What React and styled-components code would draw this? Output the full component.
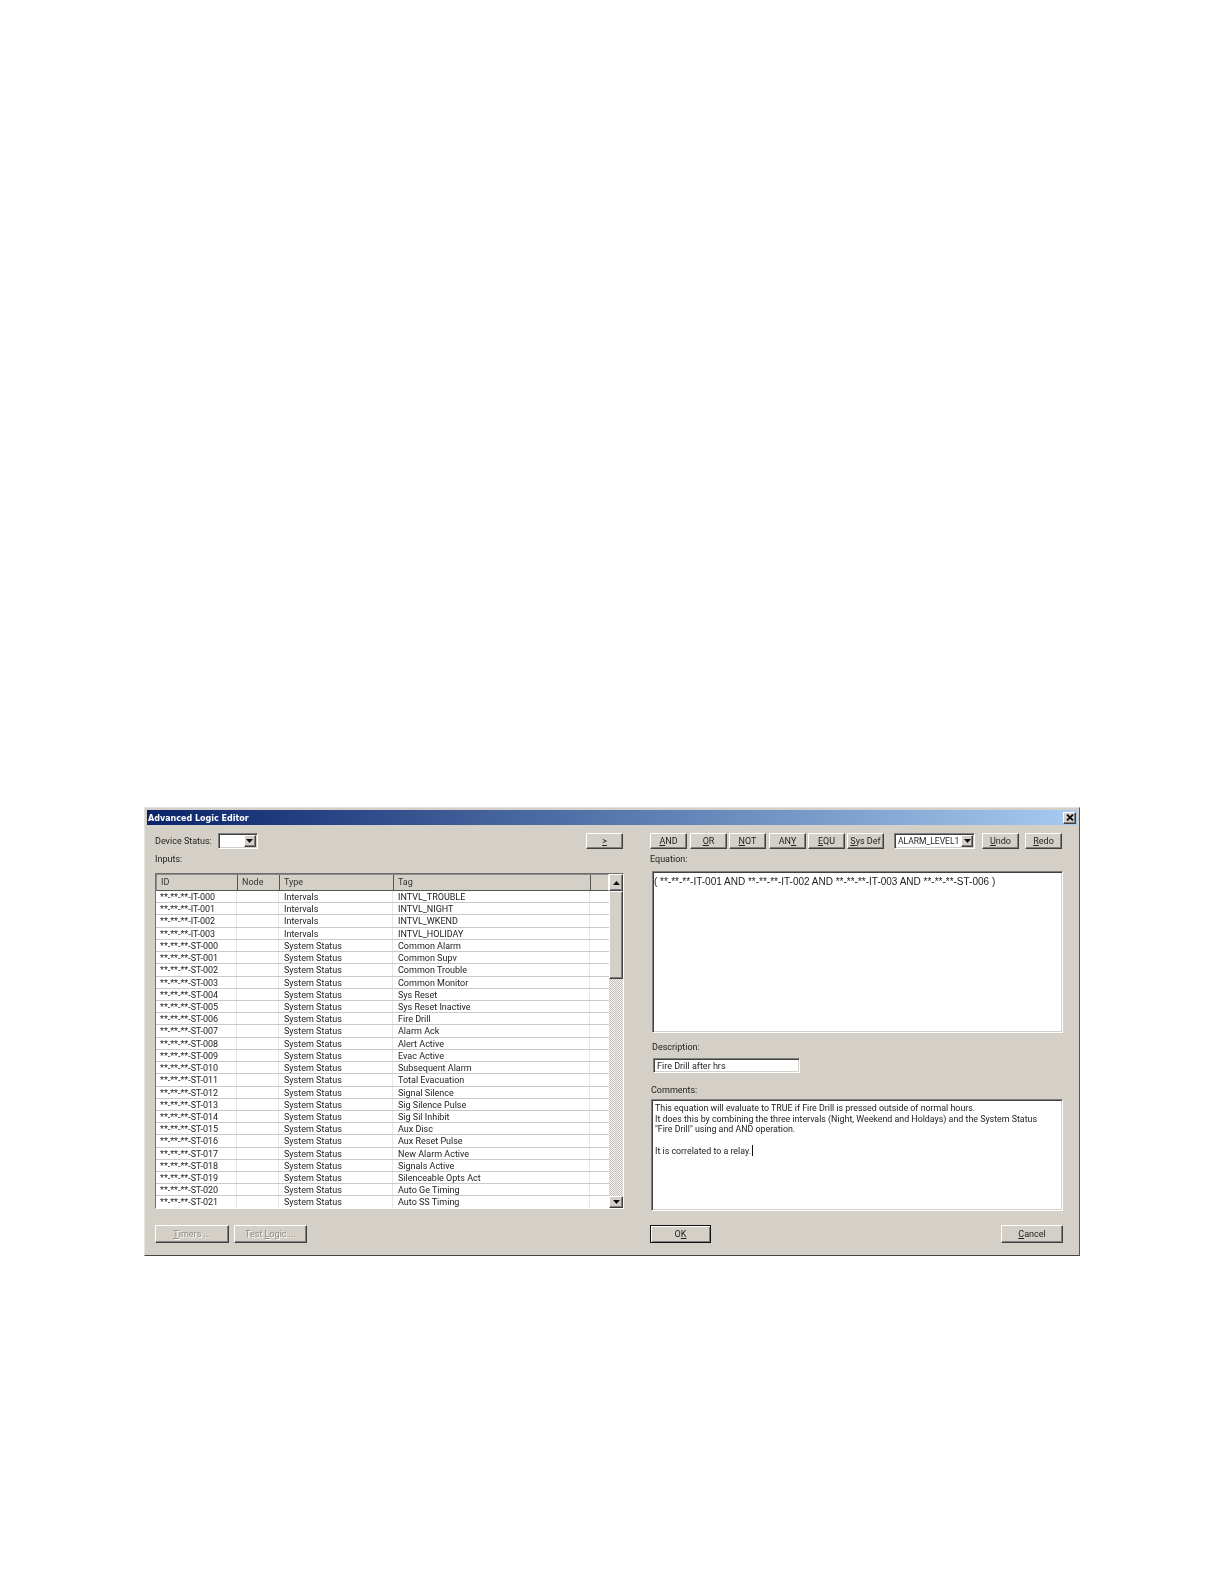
import React from 'react';
import styled, { createGlobalStyle, css } from 'styled-components';

const GlobalStyle = createGlobalStyle`
    html, body {
        margin: 0;
        padding: 0;
        background: #ffffff;
    }
`;

const FACE = '#d4d0c8';
const COLUMNS = '81px 42px 114px 197px 1fr';

const bevel = css`
    background: ${FACE};
    border: 1px solid;
    border-color: #ffffff #404040 #404040 #ffffff;
    box-shadow: inset -1px -1px 0 #808080;
`;

const sunken = css`
    box-sizing: border-box;
    background: #ffffff;
    border: 1px solid;
    border-color: #808080 #ffffff #ffffff #808080;
    box-shadow: inset 1px 1px 0 #404040, inset -1px -1px 0 ${FACE};
`;

const Page = styled.div`
    box-sizing: border-box;
    width: 1224px;
    height: 1584px;
    padding: 807px 0 0 144px;
    font-family: Roboto, 'Liberation Sans', Arial, sans-serif;
    font-size: 9px;
    color: #222222;
`;

const Dialog = styled.div`
    box-sizing: border-box;
    width: 936px;
    height: 449px;
    padding: 2px;
    background: ${FACE};
    border-top: 1px solid #e4e2dc;
    border-left: 1px solid #e4e2dc;
    border-right: 1px solid #555555;
    border-bottom: 1px solid #444444;
    filter: blur(0.3px);
`;

const TitleBar = styled.div`
    display: flex;
    align-items: center;
    justify-content: space-between;
    height: 15px;
    padding: 0 1px 0 1px;
    background: linear-gradient(90deg, #0a246a, #a6caf0);
`;

const Title = styled.span`
    padding-top: 1px;
    color: #ffffff;
    font-family: 'DejaVu Sans', Verdana, sans-serif;
    font-size: 8px;
    font-weight: bold;
`;

const CloseButton = styled.button`
    ${bevel};
    box-sizing: border-box;
    display: flex;
    align-items: center;
    justify-content: center;
    width: 13px;
    height: 12px;
    padding: 0;
`;

const Body = styled.div`
    display: flex;
    gap: 26px;
    padding: 8px 0 0 8px;
`;

const Column = styled.div`
    display: flex;
    flex-direction: column;
    width: ${props => props.$width}px;
`;

const Toolbar = styled.div`
    display: flex;
    align-items: center;
    height: 16px;
`;

const Label = styled.label`
    display: block;
    height: 12px;
    line-height: 12px;
    margin-top: ${props => props.$top || 0}px;
    margin-left: ${props => props.$indent || 0}px;
    margin-right: ${props => props.$right || 0}px;
    white-space: nowrap;
`;

const Button = styled.button`
    ${bevel};
    box-sizing: border-box;
    flex: none;
    width: ${props => props.$width}px;
    height: ${props => props.$height || 16}px;
    margin-left: ${props => props.$left || 0}px;
    margin-right: ${props => props.$right || 0}px;
    padding: 0;
    font: inherit;
    color: ${props => (props.disabled ? '#8a8a86' : '#222222')};
    text-shadow: ${props => (props.disabled ? '1px 1px 0 #ffffff' : 'none')};
    ${props =>
        props.$default &&
        css`
            border: 1px solid #111111;
            box-shadow: inset 1px 1px 0 #ffffff, inset -1px -1px 0 #808080;
        `}
`;

const Combo = styled.div`
    ${sunken};
    display: flex;
    align-items: center;
    justify-content: space-between;
    flex: none;
    width: ${props => props.$width}px;
    height: 16px;
    margin-left: ${props => props.$left || 0}px;
    padding: 0 1px 0 3px;
    font-size: 8.5px;
    white-space: nowrap;
`;

const ComboButton = styled.span`
    ${bevel};
    box-sizing: border-box;
    display: flex;
    align-items: center;
    justify-content: center;
    flex: none;
    width: 12px;
    height: 12px;
`;

const Spacer = styled.div`
    flex: 1;
`;

const TableFrame = styled.div`
    box-sizing: border-box;
    display: flex;
    height: 336px;
    margin-top: 8px;
    overflow: hidden;
    background: #ffffff;
    border: 1px solid;
    border-color: #6e6e6e #ffffff #ffffff #6e6e6e;
`;

const List = styled.div`
    flex: 1;
    min-width: 0;
    overflow: hidden;
`;

const HeaderRow = styled.div`
    ${bevel};
    box-sizing: border-box;
    display: grid;
    grid-template-columns: ${COLUMNS};
    height: 17px;
    border-color: #8a8a8a #ffffff #555555 #8a8a8a;
    box-shadow: none;
`;

const HeaderCell = styled.div`
    padding-left: 4px;
    line-height: 15px;
    color: #333333;
    border-right: 1px solid #555555;
    &:last-child {
        border-right: 0;
    }
`;

const Row = styled.div`
    box-sizing: border-box;
    display: grid;
    grid-template-columns: ${COLUMNS};
    grid-template-rows: 100%;
    height: 12.23px;
    border-bottom: 1px solid #c9c9c9;
`;

const Cell = styled.div`
    padding-left: ${props => props.$inset || 4}px;
    line-height: 13px;
    white-space: nowrap;
    border-right: 1px solid #e6e6e6;
    &:last-child {
        border-right: 0;
    }
`;

const Scrollbar = styled.div`
    display: flex;
    flex-direction: column;
    flex: none;
    width: 14px;
    background: repeating-conic-gradient(#c4c1ba 0 25%, #f4f3f0 0 50%) 0 0 / 2px 2px;
`;

const ScrollButton = styled.div`
    ${bevel};
    box-sizing: border-box;
    display: flex;
    align-items: center;
    justify-content: center;
    flex: none;
    height: ${props => props.$height}px;
`;

const ScrollThumb = styled.div`
    ${bevel};
    box-sizing: border-box;
    flex: none;
    height: 88px;
`;

const ScrollTrack = styled.div`
    flex: 1;
`;

const Footer = styled.div`
    display: flex;
    justify-content: ${props => props.$spread ? 'space-between' : 'flex-start'};
    margin-top: ${props => props.$top}px;
`;

const Editor = styled.div`
    ${sunken};
    height: ${props => props.$height}px;
    margin-top: ${props => props.$top}px;
    margin-left: ${props => props.$indent || 0}px;
    padding: 3px 3px 0;
    font-size: 8.85px;
    line-height: 10.6px;
    white-space: pre-line;
`;

const EquationEditor = styled(Editor)`
    padding: 5px 1px 0;
    font-family: 'Liberation Sans', Arial, sans-serif;
    font-size: 10px;
`;

const TextField = styled.div`
    ${sunken};
    width: 147px;
    height: 15px;
    margin-top: 5px;
    margin-left: 3px;
    padding: 0 3px;
    line-height: 14px;
`;

const Caret = styled.span`
    display: inline-block;
    width: 1px;
    height: 11px;
    margin-left: 1px;
    vertical-align: -2px;
    background: #111111;
`;

const Arrow = ({ up }) => (
    <svg width="7" height="4" viewBox="0 0 7 4">
        <path d={up ? 'M3.5 0 7 4H0Z' : 'M0 0H7L3.5 4Z'} fill="#111111" />
    </svg>
);

const intervals = ['INTVL_TROUBLE', 'INTVL_NIGHT', 'INTVL_WKEND', 'INTVL_HOLIDAY'];
const statuses = [
    'Common Alarm',
    'Common Supv',
    'Common Trouble',
    'Common Monitor',
    'Sys Reset',
    'Sys Reset Inactive',
    'Fire Drill',
    'Alarm Ack',
    'Alert Active',
    'Evac Active',
    'Subsequent Alarm',
    'Total Evacuation',
    'Signal Silence',
    'Sig Silence Pulse',
    'Sig Sil Inhibit',
    'Aux Disc',
    'Aux Reset Pulse',
    'New Alarm Active',
    'Signals Active',
    'Silenceable Opts Act',
    'Auto Ge Timing',
    'Auto SS Timing'
];

const pad = n => String(n).padStart(3, '0');

const rows = [
    ...intervals.map((tag, i) => ({ id: `**-**-**-IT-${pad(i)}`, type: 'Intervals', tag })),
    ...statuses.map((tag, i) => ({ id: `**-**-**-ST-${pad(i)}`, type: 'System Status', tag }))
];

const operators = [
    { key: 'and', width: 37, label: <><u>A</u>ND</> },
    { key: 'or', width: 37, left: 3, label: <><u>O</u>R</> },
    { key: 'not', width: 37, left: 2, label: <><u>N</u>OT</> },
    { key: 'any', width: 37, left: 3, label: <>AN<u>Y</u></> },
    { key: 'equ', width: 37, left: 2, label: <><u>E</u>QU</> },
    { key: 'sys', width: 37, left: 2, label: <><u>S</u>ys Def</> }
];

const App = () => (
    <Page>
        <GlobalStyle />
        <Dialog>
            <TitleBar>
                <Title>Advanced Logic Editor</Title>
                <CloseButton aria-label="Close">
                    <svg width="8" height="7" viewBox="0 0 8 7">
                        <path d="M1 0.5 7 6.5M7 0.5 1 6.5" stroke="#111111" strokeWidth="1.8" />
                    </svg>
                </CloseButton>
            </TitleBar>
            <Body>
                <Column $width={469}>
                    <Toolbar>
                        <Label $right={6}>Device Status:</Label>
                        <Combo $width={40}>
                            <span />
                            <ComboButton><Arrow /></ComboButton>
                        </Combo>
                        <Spacer />
                        <Button $width={37} $right={1}><u>&gt;</u></Button>
                    </Toolbar>
                    <Label $top={4}>Inputs:</Label>
                    <TableFrame>
                        <List>
                            <HeaderRow>
                                <HeaderCell>ID</HeaderCell>
                                <HeaderCell>Node</HeaderCell>
                                <HeaderCell>Type</HeaderCell>
                                <HeaderCell>Tag</HeaderCell>
                                <HeaderCell />
                            </HeaderRow>
                            {rows.map(row => (
                                <Row key={row.id}>
                                    <Cell>{row.id}</Cell>
                                    <Cell />
                                    <Cell $inset={5}>{row.type}</Cell>
                                    <Cell $inset={5}>{row.tag}</Cell>
                                    <Cell />
                                </Row>
                            ))}
                        </List>
                        <Scrollbar>
                            <ScrollButton $height={17}><Arrow up /></ScrollButton>
                            <ScrollThumb />
                            <ScrollTrack />
                            <ScrollButton $height={12}><Arrow /></ScrollButton>
                        </Scrollbar>
                    </TableFrame>
                    <Footer $top={16}>
                        <Button $width={74} $height={18} disabled><u>T</u>imers ...</Button>
                        <Button $width={73} $height={18} $left={5} disabled>Test <u>L</u>ogic ...</Button>
                    </Footer>
                </Column>
                <Column $width={413}>
                    <Toolbar>
                        {operators.map(op => (
                            <Button key={op.key} $width={op.width} $left={op.left}>{op.label}</Button>
                        ))}
                        <Combo $width={81} $left={10}>
                            <span>ALARM_LEVEL1</span>
                            <ComboButton><Arrow /></ComboButton>
                        </Combo>
                        <Button $width={37} $left={7}><u>U</u>ndo</Button>
                        <Button $width={37} $left={6}><u>R</u>edo</Button>
                    </Toolbar>
                    <Label $top={4}>Equation:</Label>
                    <EquationEditor $top={6} $height={162} $indent={2}>
                        ( **-**-**-IT-001 AND **-**-**-IT-002 AND **-**-**-IT-003 AND **-**-**-ST-006 )
                    </EquationEditor>
                    <Label $top={8} $indent={2}>Description:</Label>
                    <TextField>Fire Drill after hrs</TextField>
                    <Label $top={11} $indent={1}>Comments:</Label>
                    <Editor $top={3} $height={112} $indent={1}>
                        {'This equation will evaluate to TRUE if Fire Drill is pressed outside of normal hours.\nIt does this by combining the three intervals (Night, Weekend and Holdays) and the System Status\n"Fire Drill" using and AND operation.\n\nIt is correlated to a relay.'}
                        <Caret />
                    </Editor>
                    <Footer $top={14} $spread>
                        <Button $width={61} $height={18} $default>O<u>K</u></Button>
                        <Button $width={62} $height={18}><u>C</u>ancel</Button>
                    </Footer>
                </Column>
            </Body>
        </Dialog>
    </Page>
);

export default App;
